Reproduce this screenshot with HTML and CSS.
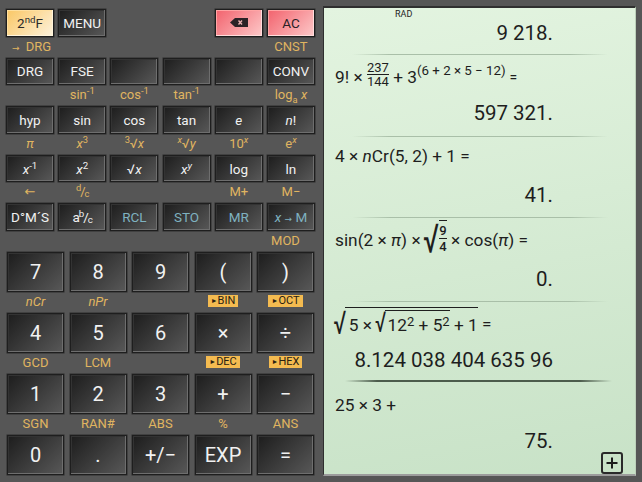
FILE: index.html
```html
<!DOCTYPE html>
<html lang="en">
  <head>
    <meta charset="UTF-8" />
    <title>Scientific Calculator</title>
    <link rel="stylesheet" href="styles.css">
  </head>
  <body>

    <div class="keypad">
      <div class="small-row">
        <button class="key key-gold">2<sup>nd</sup>F</button>
        <button class="key">MENU</button>
        <span></span>
        <span></span>
        <button class="key key-red" aria-label="Backspace">
          <svg class="back-icon" viewBox="0 0 18 9"><path d="M0 4.5 5 0H18V9H5Z" fill="#2b2226"/><path d="M8.5 2.5 12 6.5M12 2.5 8.5 6.5" stroke="#e9b0b0" stroke-width="1.4"/></svg>
        </button>
        <button class="key key-red">AC</button>
      </div>

      <div class="small-row labels">
        <span class="left-label"><span class="arrow">→</span> DRG</span><span></span><span></span><span></span><span></span><span>CNST</span>
      </div>
      <div class="small-row">
        <button class="key">DRG</button>
        <button class="key">FSE</button>
        <button class="key"></button>
        <button class="key"></button>
        <button class="key"></button>
        <button class="key">CONV</button>
      </div>

      <div class="small-row labels">
        <span></span><span>sin<sup>-1</sup></span><span>cos<sup>-1</sup></span><span>tan<sup>-1</sup></span><span></span><span>log<sub>a</sub> <i>x</i></span>
      </div>
      <div class="small-row">
        <button class="key">hyp</button>
        <button class="key">sin</button>
        <button class="key">cos</button>
        <button class="key">tan</button>
        <button class="key"><i>e</i></button>
        <button class="key"><i>n</i>!</button>
      </div>

      <div class="small-row labels">
        <span><i>π</i></span><span><i>x</i><sup>3</sup></span><span><sup>3</sup>√<i>x</i></span><span><sup><i>x</i></sup>√<i>y</i></span><span>10<sup><i>x</i></sup></span><span>e<sup><i>x</i></sup></span>
      </div>
      <div class="small-row">
        <button class="key"><i>x</i><sup>-1</sup></button>
        <button class="key"><i>x</i><sup>2</sup></button>
        <button class="key">√<i>x</i></button>
        <button class="key"><i>x</i><sup><i>y</i></sup></button>
        <button class="key">log</button>
        <button class="key">ln</button>
      </div>

      <div class="small-row labels">
        <span class="arrow-wide">←</span><span class="tight"><sup>d</sup>/<sub>c</sub></span><span></span><span></span><span>M+</span><span>M−</span>
      </div>
      <div class="small-row">
        <button class="key">D°M´S</button>
        <button class="key tight">a<sup>b</sup>/<sub>c</sub></button>
        <button class="key key-blue">RCL</button>
        <button class="key key-blue">STO</button>
        <button class="key key-blue">MR</button>
        <button class="key key-blue"><i>x</i> <span class="arrow">→</span> M</button>
      </div>

      <div class="big-row labels mod-row">
        <span></span><span></span><span></span><span></span><span>MOD</span>
      </div>
      <div class="big-row">
        <button class="key key-big">7</button>
        <button class="key key-big">8</button>
        <button class="key key-big">9</button>
        <button class="key key-big">(</button>
        <button class="key key-big">)</button>
      </div>

      <div class="big-row labels">
        <span><i>nCr</i></span><span><i>nPr</i></span><span></span><span><b class="badge"><small>►</small>BIN</b></span><span><b class="badge"><small>►</small>OCT</b></span>
      </div>
      <div class="big-row">
        <button class="key key-big">4</button>
        <button class="key key-big">5</button>
        <button class="key key-big">6</button>
        <button class="key key-big">×</button>
        <button class="key key-big">÷</button>
      </div>

      <div class="big-row labels">
        <span>GCD</span><span>LCM</span><span></span><span><b class="badge"><small>►</small>DEC</b></span><span><b class="badge"><small>►</small>HEX</b></span>
      </div>
      <div class="big-row">
        <button class="key key-big">1</button>
        <button class="key key-big">2</button>
        <button class="key key-big">3</button>
        <button class="key key-big">+</button>
        <button class="key key-big">−</button>
      </div>

      <div class="big-row labels">
        <span>SGN</span><span>RAN#</span><span>ABS</span><span>%</span><span>ANS</span>
      </div>
      <div class="big-row">
        <button class="key key-big">0</button>
        <button class="key key-big">.</button>
        <button class="key key-big">+/−</button>
        <button class="key key-big">EXP</button>
        <button class="key key-big">=</button>
      </div>
    </div>

    <div class="display">
      <div class="entry entry-first">
        <div class="rad">RAD</div>
        <div class="result">9 218.</div>
      </div>
      <div class="rule"></div>

      <div class="entry entry-a">
        <div class="expr">9! × <span class="frac frac-up"><span>237</span><span class="frac-bottom">144</span></span> + 3<sup class="power">(6 + 2 × 5 − 12)</sup><span class="eq">=</span></div>
        <div class="result">597 321.</div>
      </div>
      <div class="rule"></div>

      <div class="entry entry-b">
        <div class="expr">4 × <i>n</i>Cr(5, 2) + 1 =</div>
        <div class="result">41.</div>
      </div>
      <div class="rule"></div>

      <div class="entry entry-c">
        <div class="expr">sin(2 × <i>π</i>) × <span class="root-tall">√</span><span class="radicand-tall"><span class="frac frac-small"><span>9</span><span class="frac-bottom">4</span></span></span> × cos(<i>π</i>) =</div>
        <div class="result">0.</div>
      </div>
      <div class="rule"></div>

      <div class="entry entry-d">
        <div class="expr"><span class="root-outer">√</span><span class="radicand-outer">5 × <span class="root-inner">√</span><span class="radicand-inner">12<sup class="square">2</sup> + 5<sup class="square">2</sup></span> + 1</span> =</div>
        <div class="result">8.124 038 404 635 96</div>
      </div>
      <div class="rule rule-dark"></div>

      <div class="entry entry-e">
        <div class="expr">25 × 3 +</div>
        <div class="result">75.</div>
      </div>

      <button class="add-btn" aria-label="Add">
        <svg viewBox="0 0 14 14"><path d="M7 1.5V12.5M1.5 7H12.5" stroke="#1c1c1c" stroke-width="2"/></svg>
      </button>
    </div>

  </body>
</html>
```

FILE: styles.css
```css
* {
  margin: 0;
  padding: 0;
  box-sizing: border-box;
  font-family: "Roboto", sans-serif;
}
html,
body {
  height: 100%;
  overflow: hidden;
}
body {
  display: flex;
  background-color: #565656;
}

.keypad {
  width: 323px;
  flex-shrink: 0;
  padding: 9px 0 0 6px;
}
.small-row {
  display: grid;
  grid-template-columns: repeat(6, 48px);
  column-gap: 4.2px;
  height: 27.7px;
}
.big-row {
  display: grid;
  grid-template-columns: repeat(5, 57px);
  column-gap: 5.5px;
  height: 40px;
  margin-left: 1px;
}

.labels {
  height: 20.9px;
  color: #e0b560;
  font-size: 13px;
  line-height: 20px;
  text-align: center;
}
.big-row.labels,
.big-row.mod-row {
  height: 21px;
}
.labels sup,
.key sup,
.labels sub,
.key sub {
  font-size: 0.72em;
  line-height: 0;
}
.arrow {
  font-family: "DejaVu Sans", sans-serif;
  font-size: 9px;
}
.arrow-wide {
  font-family: "DejaVu Sans", sans-serif;
  font-size: 13px;
}
.tight {
  letter-spacing: -1px;
}
.tight sub {
  vertical-align: -1px;
}
.left-label {
  padding-left: 3px;
  white-space: nowrap;
}
.left-label .arrow {
  margin-right: 3px;
}
.badge {
  display: inline-block;
  height: 12px;
  padding: 0 3px;
  background: #f4bb50;
  color: #2a2112;
  font-size: 11px;
  font-weight: 400;
  line-height: 12px;
  vertical-align: 2px;
}
.badge small {
  font-size: 7px;
  vertical-align: 1px;
}

.key {
  border: 1px solid #1e1e1e;
  background: linear-gradient(135deg, #1d1d1d, #585858);
  box-shadow: inset -1px -1px 0 #6e6e6e, inset 1px 1px 0 #333333, 0 0 0 0.5px #2c2c2c;
  color: #f1f1f1;
  font-size: 13.5px;
}
.key-big {
  font-size: 20px;
}
.key-blue {
  color: #7fb2c0;
}
.key-gold {
  background: linear-gradient(135deg, #fac765, #fdf2dc);
  box-shadow: inset -1px -1px 0 #fff4dc, inset 1px 1px 0 #ffe0a0, 0 0 0 0.5px #2c2c2c;
  color: #2a2a2a;
}
.key-red {
  background: linear-gradient(135deg, #f2626d, #fdc9c9);
  box-shadow: inset -1px -1px 0 #ffdcdc, inset 1px 1px 0 #ffa5a5, 0 0 0 0.5px #2c2c2c;
  color: #2a2226;
}
.back-icon {
  display: block;
  width: 18px;
  height: 9px;
  margin: 0 auto;
}

.display {
  position: relative;
  width: 313px;
  height: 470px;
  margin-top: 6px;
  border-top: 2px solid #2f2f2f;
  border-left: 1px solid #2f2f2f;
  border-right: 1px solid #bcd0ba;
  border-bottom: 2px solid #9c9c9c;
  background: linear-gradient(170deg, #e3f4e0, #c8e2c7);
  color: #1e1e1e;
}
.entry {
  padding: 0 82px 0 11px;
}
.rad {
  height: 13px;
  padding-left: 60px;
  font-size: 9px;
  line-height: 13px;
}
.expr {
  display: flex;
  align-items: center;
  font-size: 17.3px;
  white-space: pre;
}
.result {
  font-size: 20.5px;
  line-height: 22px;
  text-align: right;
  white-space: nowrap;
}

.entry-first {
  height: 46px;
}
.entry-first .result {
  margin-top: 1px;
}
.entry-a {
  height: 81px;
}
.entry-a .expr {
  height: 44px;
}
.entry-a .result {
  margin-top: 3px;
}
.entry-b {
  height: 80px;
}
.entry-b .expr {
  height: 38px;
}
.entry-b .result {
  margin-top: 9px;
}
.entry-c {
  height: 83px;
}
.entry-c .expr {
  height: 44px;
}
.entry-c .result {
  margin-top: 6px;
}
.entry-d {
  height: 78px;
}
.entry-d .expr {
  height: 44px;
}
.entry-d .result {
  margin-top: 3px;
}
.entry-e {
  height: 90px;
}
.entry-e .expr {
  height: 46px;
}
.entry-e .result {
  margin-top: 2px;
}

.rule {
  height: 1px;
  margin: 0 27px 0 28px;
  background: linear-gradient(90deg, transparent, #a9bfa8 15%, #a9bfa8 85%, transparent);
}
.rule-dark {
  height: 2px;
  margin: 0 23px 0 21px;
  background: linear-gradient(90deg, transparent, #4c5c4c 12%, #4c5c4c 88%, transparent);
}

.frac {
  display: inline-flex;
  flex-direction: column;
  align-items: center;
  font-size: 13px;
  line-height: 13px;
}
.frac-up {
  margin-bottom: 5px;
}
.frac-bottom {
  border-top: 1px solid #1e1e1e;
}
.frac-small {
  font-weight: 500;
  line-height: 15px;
}
.power {
  align-self: flex-start;
  margin-top: 8px;
  font-size: 13.3px;
  line-height: 16px;
}
.eq {
  margin-left: 4px;
  font-size: 14px;
}

/* the radical glyph is squeezed so it is tall but stays narrow */
.root-tall {
  margin: 0 -4px 2px -6px;
  font-size: 41px;
  line-height: 40px;
  transform: scaleX(0.65);
}
.radicand-tall {
  display: inline-flex;
  margin-bottom: 6px;
  padding-top: 2px;
  border-top: 1px solid #1e1e1e;
}
.root-outer {
  margin: 0 -5px 2px -5px;
  font-size: 33px;
  line-height: 34px;
  transform: scaleX(0.65);
}
.radicand-outer {
  display: inline-block;
  padding-left: 4px;
  border-top: 1px solid #1e1e1e;
  line-height: 34px;
}
.root-inner {
  display: inline-block;
  margin: 0 -5px 0 -4px;
  font-size: 29px;
  line-height: 0;
  vertical-align: -1px;
  transform: scaleX(0.65);
}
.radicand-inner {
  display: inline-block;
  padding-left: 3px;
  border-top: 1px solid #1e1e1e;
  line-height: 28px;
}
.square {
  font-size: 13px;
  line-height: 0;
  vertical-align: 5px;
}

.add-btn {
  position: absolute;
  right: 12px;
  bottom: 0;
  width: 22px;
  height: 22px;
  border: 2px solid #2a2a2a;
  border-radius: 3px;
  background: transparent;
}
.add-btn svg {
  display: block;
  width: 14px;
  height: 14px;
  margin: 0 auto;
}
```
